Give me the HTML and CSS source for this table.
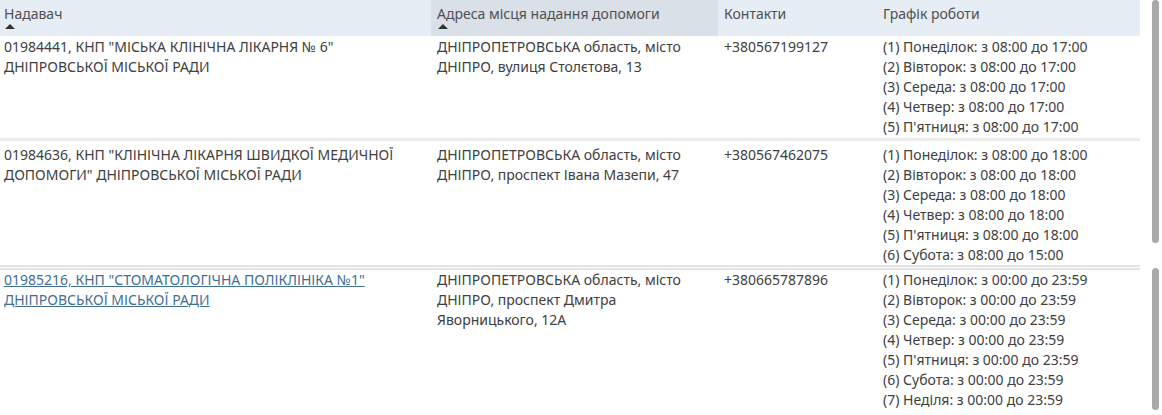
FILE: index.html
```html
<!DOCTYPE html>
<html lang="uk">
<head>
<meta charset="utf-8">
<title>Надавачі</title>
<link rel="stylesheet" href="styles.css">
</head>
<body>
<div class="page">
  <table class="grid">
    <colgroup>
      <col class="c1"><col class="c2"><col class="c3"><col class="c4">
    </colgroup>
    <thead>
      <tr>
        <th><span class="h">Надавач</span><span class="arrow"></span></th>
        <th class="sorted"><span class="h">Адреса місця надання допомоги</span><span class="arrow"></span></th>
        <th><span class="h">Контакти</span></th>
        <th><span class="h">Графік роботи</span></th>
      </tr>
    </thead>
    <tbody>
      <tr class="r1">
        <td>01984441, КНП "МІСЬКА КЛІНІЧНА ЛІКАРНЯ № 6" ДНІПРОВСЬКОЇ МІСЬКОЇ РАДИ</td>
        <td>ДНІПРОПЕТРОВСЬКА область, місто ДНІПРО, вулиця Столєтова, 13</td>
        <td>+380567199127</td>
        <td>(1) Понеділок: з 08:00 до 17:00<br>(2) Вівторок: з 08:00 до 17:00<br>(3) Середа: з 08:00 до 17:00<br>(4) Четвер: з 08:00 до 17:00<br>(5) П'ятниця: з 08:00 до 17:00</td>
      </tr>
      <tr class="r2">
        <td>01984636, КНП "КЛІНІЧНА ЛІКАРНЯ ШВИДКОЇ МЕДИЧНОЇ ДОПОМОГИ" ДНІПРОВСЬКОЇ МІСЬКОЇ РАДИ</td>
        <td>ДНІПРОПЕТРОВСЬКА область, місто ДНІПРО, проспект Івана Мазепи, 47</td>
        <td>+380567462075</td>
        <td>(1) Понеділок: з 08:00 до 18:00<br>(2) Вівторок: з 08:00 до 18:00<br>(3) Середа: з 08:00 до 18:00<br>(4) Четвер: з 08:00 до 18:00<br>(5) П'ятниця: з 08:00 до 18:00<br>(6) Субота: з 08:00 до 15:00</td>
      </tr>
      <tr class="r3">
        <td><a class="link" href="#">01985216, КНП "СТОМАТОЛОГІЧНА ПОЛІКЛІНІКА №1" ДНІПРОВСЬКОЇ МІСЬКОЇ РАДИ</a></td>
        <td>ДНІПРОПЕТРОВСЬКА область, місто ДНІПРО, проспект Дмитра Яворницького, 12А</td>
        <td>+380665787896</td>
        <td>(1) Понеділок: з 00:00 до 23:59<br>(2) Вівторок: з 00:00 до 23:59<br>(3) Середа: з 00:00 до 23:59<br>(4) Четвер: з 00:00 до 23:59<br>(5) П'ятниця: з 00:00 до 23:59<br>(6) Субота: з 00:00 до 23:59<br>(7) Неділя: з 00:00 до 23:59</td>
      </tr>
    </tbody>
  </table>
  <div class="gutter">
    <div class="thumb t1"></div>
    <div class="thumb t2"></div>
  </div>
</div>
</body>
</html>
```

FILE: styles.css
```css
html, body {
  margin: 0;
  padding: 0;
  background: #ffffff;
}
body {
  font-family: "Noto Sans", "Open Sans", sans-serif;
  font-size: 14px;
  color: #404040;
}
.page {
  display: flex;
  width: 1162px;
  height: 415px;
  overflow: hidden;
}
.grid {
  width: 1140px;
  border-collapse: collapse;
  table-layout: fixed;
  align-self: flex-start;
}
.c1 { width: 431px; }
.c2 { width: 287px; }
.c3 { width: 159px; }
.c4 { width: 263px; }
th {
  background: #e6edf4;
  color: #505050;
  font-weight: normal;
  text-align: left;
  vertical-align: top;
  height: 36px;
  padding: 4px 6px 0 6px;
  box-sizing: border-box;
  line-height: 20px;
}
th:first-child { padding-left: 4px; }
th.sorted { background: #d9e0e8; }
.h { display: block; }
.arrow {
  display: block;
  width: 0;
  height: 0;
  margin-left: 1px;
  margin-top: 0;
  border-left: 5px solid transparent;
  border-right: 5px solid transparent;
  border-bottom: 5px solid #333;
}
td {
  vertical-align: top;
  padding: 1px 6px 1px 6px;
  line-height: 20px;
}
td:first-child { padding-left: 4px; }
.r2 td {
  border-top: 3px solid #ececec;
  padding-top: 4px;
}
.r2 td { padding-bottom: 0; }
.r3 td {
  border-top: 5px double #e3e3e3;
  padding-top: 0;
}
.link {
  color: #3f6f96;
  text-decoration: underline;
}
.gutter {
  flex: 1;
  display: flex;
  flex-direction: column;
  align-items: flex-end;
  padding-right: 3px;
}
.thumb {
  width: 7px;
  background: #a9a9a9;
  border-radius: 4px;
}
.t1 { height: 243px; }
.t2 { height: 142px; margin-top: 25px; }
```
